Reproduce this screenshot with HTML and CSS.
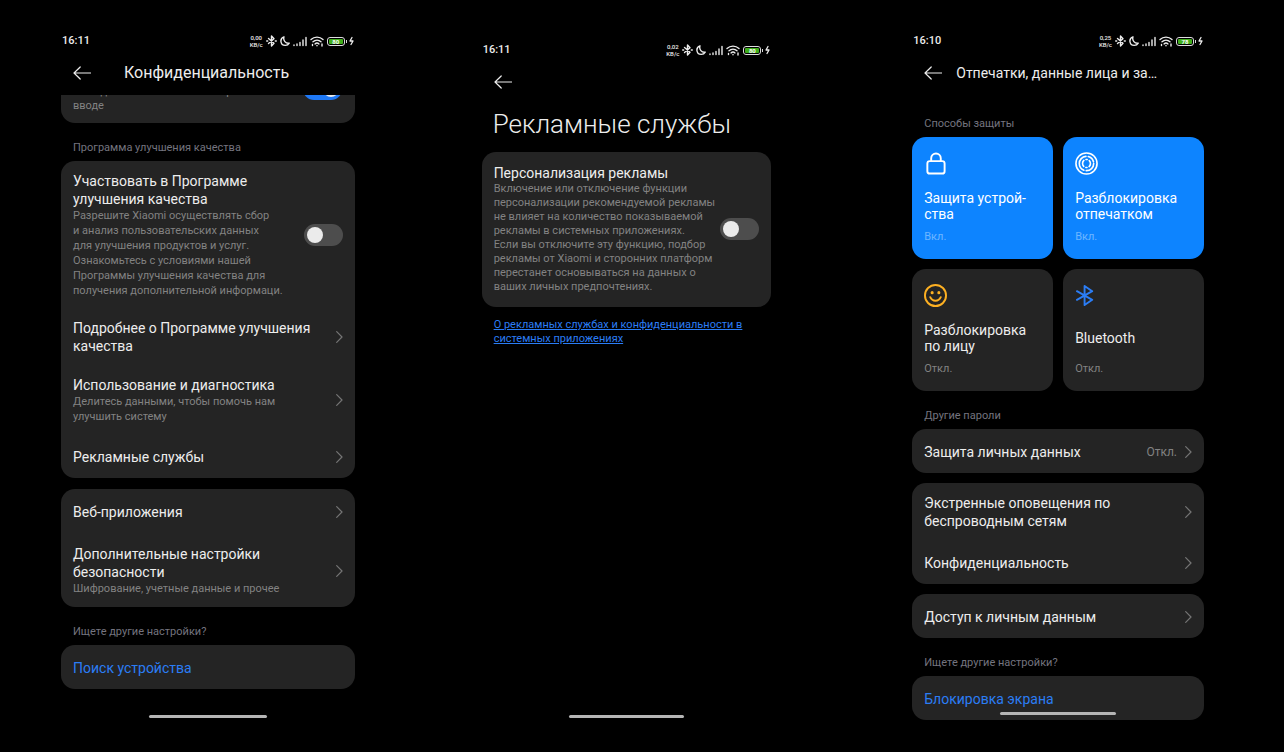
FILE: index.html
```html
<!DOCTYPE html>
<html lang="ru">
<head>
<meta charset="utf-8">
<meta name="viewport" content="width=device-width, initial-scale=1">
<title>Настройки конфиденциальности</title>
<link rel="stylesheet" href="styles.css">
</head>
<body>
<svg class="sprite" aria-hidden="true">
  <symbol id="bt" viewBox="0 0 11 12"><path d="M2.500 3.500 8 8.300 5.500 11V1L8 3.700 2.500 8.500"/><path d="M.7 6h1M9.300 6h1"/></symbol>
  <symbol id="moon" viewBox="0 0 10 12"><path d="M4 1.800C1.800 2.500.8 4.300.9 6.200c.2 2.400 2.100 4.200 4.400 4.200 1.600 0 3.100-.8 3.900-2.200C5.800 8.800 2.800 5.600 4 1.800Z"/></symbol>
  <symbol id="signal" viewBox="0 0 14 12"><path d="M1 10v.5M4 9v1.500M7 7.500v3M10 5V10.500M13 2.500V10.500"/></symbol>
  <symbol id="wifi" viewBox="0 0 14 12"><path d="M1 4.500c3.400-3.200 8.600-3.200 12 0M3 6.800c2.300-2.100 5.700-2.100 8 0M5 8.900c1.100-1 2.900-1 4 0"/><path d="M7 10.500v.3M12 9v2M2.500 9.500v1"/></symbol>
  <symbol id="bolt" viewBox="0 0 5 10"><path d="M3 1.500 1 5h3L2 8.500"/></symbol>
  <symbol id="arrow" viewBox="0 0 18 14"><path d="M7.200 1 1 7l6.200 6M1 7h17"/></symbol>
  <symbol id="chevron" viewBox="0 0 7 12"><path d="m.7.700 5.300 5.300-5.300 5.300"/></symbol>
</svg>

<main class="stage">
  <section class="phone phone-privacy" aria-label="Конфиденциальность">
    <div class="status">
      <span class="time">16:11</span>
      <span class="speed">0,00<br>KB/c</span>
      <svg class="st w11"><use href="#bt"/></svg>
      <svg class="st w10"><use href="#moon"/></svg>
      <svg class="st w14"><use href="#signal"/></svg>
      <svg class="st w14"><use href="#wifi"/></svg>
      <span class="battery"><span class="charge">80</span></span>
      <svg class="bolt"><use href="#bolt"/></svg>
    </div>
    <header class="bar bar-wide">
      <button class="back" aria-label="Назад"><svg><use href="#arrow"/></svg></button>
      <h1 class="bar-title large">Конфиденциальность</h1>
    </header>
    <div class="card clipped">
      <label class="desc tight" for="sw-input">Выводить символы и знаки при<br>вводе</label>
      <input class="switch" type="checkbox" role="switch" id="sw-input" checked>
    </div>
    <h2 class="label">Программа улучшения качества</h2>
    <div class="card">
      <div class="row">
        <label class="text" for="sw-quality"><span class="name">Участвовать в Программе<br>улучшения качества</span><span class="desc">Разрешите Xiaomi осуществлять сбор<br>и анализ пользовательских данных<br>для улучшения продуктов и услуг.<br>Ознакомьтесь с условиями нашей<br>Программы улучшения качества для<br>получения дополнительной информаци.</span></label>
        <input class="switch" type="checkbox" role="switch" id="sw-quality">
      </div>
      <a class="row" href="#"><span class="text"><span class="name">Подробнее о Программе улучшения<br>качества</span></span><svg class="chevron"><use href="#chevron"/></svg></a>
      <a class="row" href="#"><span class="text"><span class="name">Использование и диагностика</span><span class="desc">Делитесь данными, чтобы помочь нам<br>улучшить систему</span></span><svg class="chevron"><use href="#chevron"/></svg></a>
      <a class="row" href="#"><span class="text"><span class="name">Рекламные службы</span></span><svg class="chevron"><use href="#chevron"/></svg></a>
    </div>
    <div class="card next">
      <a class="row" href="#"><span class="text"><span class="name">Веб-приложения</span></span><svg class="chevron"><use href="#chevron"/></svg></a>
      <a class="row row-roomy" href="#"><span class="text"><span class="name">Дополнительные настройки<br>безопасности</span><span class="desc">Шифрование, учетные данные и прочее</span></span><svg class="chevron"><use href="#chevron"/></svg></a>
    </div>
    <h2 class="label">Ищете другие настройки?</h2>
    <div class="card"><a class="row accent" href="#"><span class="name">Поиск устройства</span></a></div>
    <div class="home"></div>
  </section>

  <section class="phone phone-ads" aria-label="Рекламные службы">
    <div class="status">
      <span class="time">16:11</span>
      <span class="speed">0,02<br>KB/c</span>
      <svg class="st w11"><use href="#bt"/></svg>
      <svg class="st w10"><use href="#moon"/></svg>
      <svg class="st w14"><use href="#signal"/></svg>
      <svg class="st w14"><use href="#wifi"/></svg>
      <span class="battery"><span class="charge">80</span></span>
      <svg class="bolt"><use href="#bolt"/></svg>
    </div>
    <header class="bar">
      <button class="back" aria-label="Назад"><svg><use href="#arrow"/></svg></button>
    </header>
    <h1 class="page-title">Рекламные службы</h1>
    <div class="card">
      <div class="row row-tall">
        <label class="text" for="sw-ads"><span class="name">Персонализация рекламы</span><span class="desc tight">Включение или отключение функции<br>персонализации рекомендуемой рекламы<br>не влияет на количество показываемой<br>рекламы в системных приложениях.<br>Если вы отключите эту функцию, подбор<br>рекламы от Xiaomi и сторонних платформ<br>перестанет основываться на данных о<br>ваших личных предпочтениях.</span></label>
        <input class="switch" type="checkbox" role="switch" id="sw-ads">
      </div>
    </div>
    <p class="note"><a href="#">О рекламных службах и конфиденциальности в<br>системных приложениях</a></p>
    <div class="home"></div>
  </section>

  <section class="phone phone-security" aria-label="Отпечатки и данные лица">
    <div class="status">
      <span class="time">16:10</span>
      <span class="speed">0,25<br>KB/c</span>
      <svg class="st w11"><use href="#bt"/></svg>
      <svg class="st w10"><use href="#moon"/></svg>
      <svg class="st w14"><use href="#signal"/></svg>
      <svg class="st w14"><use href="#wifi"/></svg>
      <span class="battery"><span class="charge">78</span></span>
      <svg class="bolt"><use href="#bolt"/></svg>
    </div>
    <header class="bar">
      <button class="back" aria-label="Назад"><svg><use href="#arrow"/></svg></button>
      <h1 class="bar-title">Отпечатки, данные лица и за…</h1>
    </header>
    <h2 class="label first">Способы защиты</h2>
    <div class="tiles">
      <button class="tile on">
        <svg class="icon" viewBox="0 0 24 24"><rect x="3.500" y="9.500" width="18" height="13" rx="2.500"/><path d="M7.500 9.500V6.500a5 5 0 0 1 10 0v3"/></svg>
        <span class="tile-name"><span>Защита устрой-<br>ства</span></span><span class="state">Вкл.</span>
      </button>
      <button class="tile on">
        <svg class="icon print" viewBox="0 0 24 24"><circle cx="12" cy="12" r="11"/><circle cx="12" cy="12" r="7.500" stroke-dasharray="12 2.500 20 2.500 8 2.120"/><path d="M9.300 8.800a4.300 4.300 0 0 0-.2 6.200M11.500 7.800h1.200M14.900 9a4.300 4.300 0 0 1-.2 6.200M12.500 16.200H11.300"/></svg>
        <span class="tile-name"><span>Разблокировка<br>отпечатком</span></span><span class="state">Вкл.</span>
      </button>
      <button class="tile">
        <svg class="icon face" viewBox="0 0 24 24"><circle cx="12" cy="12" r="11"/><path d="M6.500 13.800c2.200 5 8.800 5 11 0"/><circle class="eye" cx="8.500" cy="9" r="1.600"/><circle class="eye" cx="15.500" cy="9" r="1.600"/></svg>
        <span class="tile-name"><span>Разблокировка<br>по лицу</span></span><span class="state">Откл.</span>
      </button>
      <button class="tile">
        <svg class="icon blue" viewBox="0 0 24 24"><path d="m2 7.500 16 9L10 22V2l8 5.500-16 9"/></svg>
        <span class="tile-name"><span>Bluetooth</span></span><span class="state">Откл.</span>
      </button>
    </div>
    <h2 class="label">Другие пароли</h2>
    <div class="card"><a class="row" href="#"><span class="text"><span class="name">Защита личных данных</span></span><span class="value">Откл.</span><svg class="chevron"><use href="#chevron"/></svg></a></div>
    <div class="card next">
      <a class="row" href="#"><span class="text"><span class="name">Экстренные оповещения по<br>беспроводным сетям</span></span><svg class="chevron"><use href="#chevron"/></svg></a>
      <a class="row" href="#"><span class="text"><span class="name">Конфиденциальность</span></span><svg class="chevron"><use href="#chevron"/></svg></a>
    </div>
    <div class="card next"><a class="row" href="#"><span class="text"><span class="name">Доступ к личным данным</span></span><svg class="chevron"><use href="#chevron"/></svg></a></div>
    <h2 class="label">Ищете другие настройки?</h2>
    <div class="card last"><a class="row accent" href="#"><span class="name">Блокировка экрана</span></a><div class="home over"></div></div>
  </section>
</main>
</body>
</html>
```

FILE: styles.css
```css
* { box-sizing: border-box; }

body {
  margin: 0;
  background: #000;
  color: #ededed;
  font: 14px/18px Roboto, "Noto Sans", sans-serif;
}

h1, h2, p { margin: 0; font-weight: 400; }
a { color: inherit; text-decoration: none; }
button { border: 0; background: none; color: inherit; font: inherit; text-align: left; padding: 0; cursor: pointer; }
svg { display: block; flex: none; fill: none; stroke: currentColor; stroke-linecap: round; stroke-linejoin: round; }
.sprite { position: absolute; width: 0; height: 0; }

.stage {
  display: grid;
  grid-template-columns: 294fr 127fr 290fr 141fr 292fr;
  min-height: 100vh;
  padding: 31px 80px 32px 61px;
}
.phone { display: flex; flex-direction: column; white-space: nowrap; min-width: 0; }
.phone-ads { grid-column: 3; padding-top: 9px; }
.phone-security { grid-column: 5; }

/* status bar */
.status { display: flex; align-items: center; height: 20px; padding: 0 1px; gap: 3px; }
.time { flex: 1; font-size: 11px; font-weight: 500; line-height: 20px; }
.speed { font-size: 6px; font-weight: 500; line-height: 7px; text-align: center; }
.st { height: 12px; stroke-width: 1.400; }
.w10 { width: 10px; }
.w11 { width: 11px; }
.w14 { width: 14px; }
.battery { position: relative; display: flex; width: 18px; height: 9px; margin-right: 1px; padding: 1px; border: 1px solid #ddd; border-radius: 3px; }
.battery::after { content: ""; position: absolute; right: -3px; top: 2px; width: 1px; height: 3px; background: #ddd; }
.charge { width: 14px; border-radius: 1px; background: #3fae1a; color: #fff; font-size: 6px; font-weight: 700; line-height: 5px; text-align: center; }
.bolt { width: 5px; height: 10px; stroke-width: 1.300; }

/* title bars */
.bar { display: flex; align-items: center; height: 44px; padding: 0 12px; gap: 14px; }
.bar-wide { gap: 33px; }
.back svg { width: 18px; height: 14px; stroke-width: 1.200; }
.bar-title { font-size: 14px; line-height: 20px; }
.large { font-size: 16px; }
.page-title { padding: 2px 11px 10px; font-size: 26px; line-height: 36px; font-weight: 300; }

/* cards and rows */
.card { border-radius: 14px; background: #242424; }
.next { margin-top: 10px; }
.phone-privacy .next { margin-top: 11px; }
.row { display: flex; align-items: center; min-height: 44px; padding: 11px 12px 10px; }
.row-roomy { padding: 12px 12px 11px; }
.row-tall { padding: 12px 12px 13px; }
.text { flex: 1; min-width: 0; }
.name, .desc { display: block; }
.desc { color: #828282; font-size: 11px; line-height: 15px; }
.tight { line-height: 14px; }
.accent { color: #2b7df5; }
.value { margin-right: 8px; color: #828282; font-size: 12px; }
.chevron { width: 7px; height: 12px; color: #757575; stroke-width: 1.200; }
.label { padding: 16px 12px 4px; color: #74747f; font-size: 11px; line-height: 18px; }
.first { margin-top: 4px; }

.clipped {
  display: flex;
  align-items: flex-end;
  justify-content: space-between;
  height: 28px;
  padding: 0 12px 10px;
  overflow: hidden;
  border-radius: 0 0 14px 14px;
}
.clipped .switch { margin: 0 1px 13px 0; }

.switch {
  appearance: none;
  flex: none;
  width: 39px;
  height: 22px;
  margin: 0;
  padding: 3px;
  border-radius: 11px;
  background: #4d4d4d;
}
.switch::before { content: ""; display: block; width: 16px; height: 16px; border-radius: 50%; background: #ebebeb; }
.switch:checked { background: #1e78f5; }
.switch:checked::before { margin-left: auto; }

.note { padding: 11px 12px; color: #2b7df5; font-size: 11px; line-height: 14px; }
.note a { text-decoration: underline; }

/* protection tiles */
.tiles { display: grid; grid-template-columns: 1fr 1fr; gap: 10px; }
.tile { display: flex; flex-direction: column; padding: 15px 12px 14px; border-radius: 14px; background: #242424; }
.on { background: #0d84ff; color: #fff; }
.icon { width: 23px; height: 23px; stroke-width: 2; }
.print { stroke-width: 1.700; }
.face { color: #fdb022; }
.eye { fill: currentColor; stroke: none; }
.blue { color: #2b7df5; }
.tile-name { display: flex; align-items: center; height: 32px; margin: 15px 0 7px; line-height: 16px; }
.state { color: #828282; font-size: 11px; line-height: 16px; }
.on .state { color: #6db6ff; }

/* gesture handle */
.home { width: 40%; height: 3px; margin: auto auto 2px; border-radius: 2px; background: #b5b5b5; }
.last { position: relative; }
.over { position: absolute; left: 30%; bottom: 5px; margin: 0; }
```
